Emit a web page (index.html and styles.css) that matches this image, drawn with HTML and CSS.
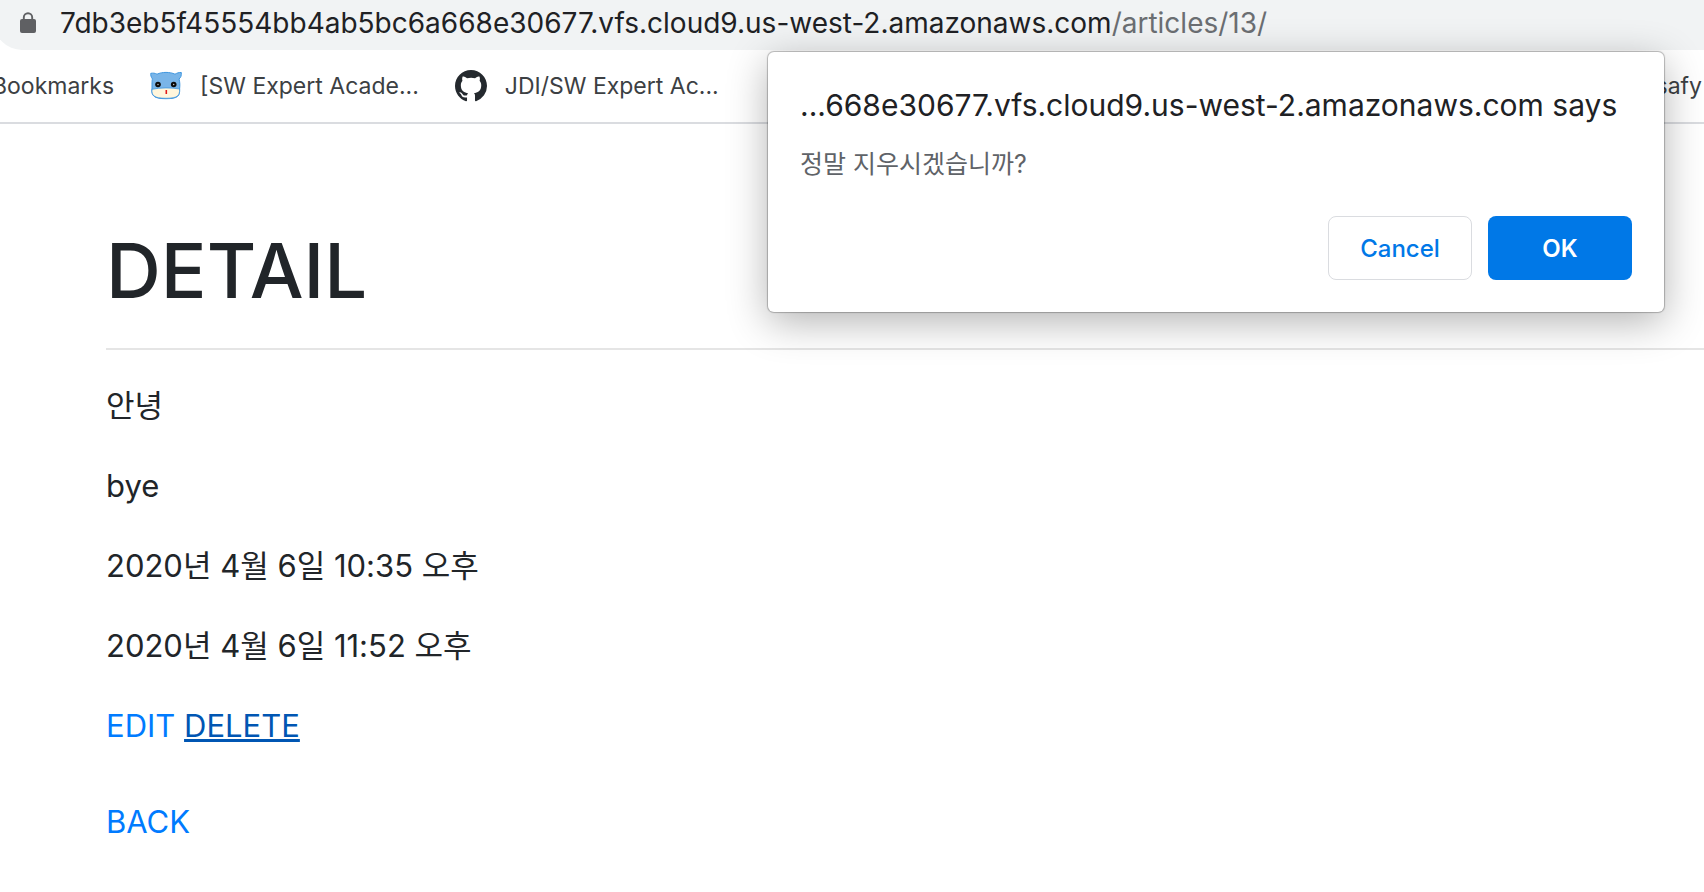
FILE: index.html
```html
<!DOCTYPE html>
<html lang="ko">
<head>
<meta charset="utf-8">
<meta name="viewport" content="width=device-width, initial-scale=1">
<title>DETAIL</title>
<link rel="stylesheet" href="styles.css">
</head>
<body>
<header class="browser">
  <div class="omnibox">
    <svg class="lock" viewBox="0 0 16 22" aria-hidden="true">
      <path d="M3.800 8V5.400a4.200 4.200 0 0 1 8.400 0V8" fill="none" stroke="#5f6063" stroke-width="1.900"/>
      <rect x="0" y="7" width="16" height="14" rx="2" fill="#5f6063"/>
    </svg>
    <div class="url">7db3eb5f45554bb4ab5bc6a668e30677.vfs.cloud9.us-west-2.amazonaws.com<span class="path">/articles/13/</span></div>
  </div>
  <nav class="bookmarks" aria-label="Bookmarks">
    <a class="bookmark first" href="#">Bookmarks</a>
    <a class="bookmark" href="#">
      <svg class="icon" viewBox="0 0 32 32" aria-hidden="true">
        <path d="M2 18C2 12 2 10 2.500 9C1 7 0.500 5 .8 3.300C3 3 5 3 7 4.200C12 1.800 20 1.800 25 4.200C27 3 29 2.300 31.300 2.500C31.500 5.500 31 7.500 29 9C30 12 30 15 29.600 19C30 26 28 28.700 16 28.700C4 28.700 1 26 2 18Z" fill="#79b5e8" stroke="#3f97e0" stroke-width="1"/>
        <path d="M2 19.300C10 17.500 22 17.500 29.600 19C29.800 25.500 28 28.300 16 28.300C4 28.300 1.400 25.500 2 19.300Z" fill="#fff6dc" stroke="#3f97e0" stroke-width="0.800"/>
        <circle cx="8" cy="14.500" r="2.800" fill="#0b0b0b"/>
        <circle cx="23.700" cy="14.500" r="2.800" fill="#0b0b0b"/>
        <circle cx="8" cy="14.500" r=".7" fill="#ccc"/>
        <circle cx="23.700" cy="14.500" r=".7" fill="#ccc"/>
        <path d="M16.300 20v4" stroke="#e01b1b" stroke-width="1.600"/>
      </svg>
      <span>[SW Expert Acade...</span>
    </a>
    <a class="bookmark" href="#">
      <svg class="icon" viewBox="0 0 16 16" aria-hidden="true">
        <path fill="#24292e" d="M8 0C3.580 0 0 3.580 0 8c0 3.540 2.290 6.530 5.470 7.590.4.070.55-.17.55-.38 0-.19-.01-.82-.01-1.490-2.010.37-2.530-.49-2.690-.94-.09-.23-.48-.94-.82-1.130-.28-.15-.68-.52-.01-.53.63-.01 1.080.58 1.230.82.72 1.210 1.870.87 2.330.66.070-.52.28-.87.51-1.070-1.780-.2-3.640-.89-3.640-3.950 0-.87.31-1.590.82-2.150-.08-.2-.36-1.020.08-2.120 0 0 .67-.21 2.200.82.64-.18 1.320-.27 2-.27s1.360.09 2 .27c1.530-1.040 2.200-.82 2.200-.82.44 1.100.16 1.920.08 2.120.51.56.82 1.270.82 2.150 0 3.070-1.870 3.750-3.650 3.950.29.25.54.73.54 1.480 0 1.070-.01 1.930-.01 2.200 0 .21.15.46.55.38A8.010 8.010 0 0 0 16 8c0-4.420-3.580-8-8-8z"/>
      </svg>
      <span>JDI/SW Expert Ac...</span>
    </a>
    <a class="bookmark last" href="#">ssafy</a>
  </nav>
</header>

<main class="page">
  <h1>DETAIL</h1>
  <hr>
  <p>안녕</p>
  <p>bye</p>
  <p>2020년 4월 6일 10:35 오후</p>
  <p>2020년 4월 6일 11:52 오후</p>
  <div class="actions"><a href="#">EDIT</a> <a class="hovered" href="#">DELETE</a></div>
  <a href="#">BACK</a>
</main>

<div class="dialog" role="alertdialog" aria-labelledby="dialog-title" aria-describedby="dialog-text">
  <h2 id="dialog-title">...668e30677.vfs.cloud9.us-west-2.amazonaws.com says</h2>
  <p id="dialog-text">정말 지우시겠습니까?</p>
  <div class="buttons">
    <button type="button" class="cancel">Cancel</button>
    <button type="button" class="ok">OK</button>
  </div>
</div>
</body>
</html>
```

FILE: styles.css
```css
* {
  box-sizing: border-box;
}

body {
  margin: 0;
  overflow-x: hidden;
  background: #fff;
  color: #212529;
  font-family: Inter, "Noto Sans CJK KR", sans-serif;
  font-size: 31px;
  line-height: 48px;
}

.browser {
  border-bottom: 2px solid #dadce0;
}

.omnibox {
  display: flex;
  align-items: center;
  gap: 24px;
  height: 50px;
  margin-left: -6px;
  padding: 0 0 4px 26px;
  border-bottom-left-radius: 28px;
  background: #f1f3f4;
}

.lock {
  width: 16px;
  height: 22px;
}

.url {
  color: #202124;
  font-size: 28px;
  line-height: 44px;
  white-space: nowrap;
}

.path {
  color: #6b6e72;
}

.bookmarks {
  display: flex;
  align-items: center;
  gap: 36px;
  height: 72px;
  overflow: hidden;
}

.bookmark {
  display: flex;
  flex: none;
  align-items: center;
  gap: 18px;
  color: #3c4043;
  font-size: 23px;
  line-height: 32px;
  text-decoration: none;
}

.bookmark.first {
  margin-left: -8px;
}

.bookmark.last {
  margin-left: auto;
  padding-right: 2px;
}

.icon {
  width: 32px;
  height: 32px;
}

.page {
  padding: 98px 0 70px 106px;
}

.page h1 {
  margin: 0;
  font-size: 76px;
  font-weight: 500;
  line-height: 96px;
}

.page hr {
  margin: 30px 0 32px;
  border: 0;
  border-top: 2px solid #e5e5e5;
}

.page p {
  margin: 0 0 32px;
}

.page a {
  color: #007bff;
  text-decoration: none;
}

.page a.hovered {
  color: #0056b3;
  text-decoration: underline;
}

.actions {
  margin-bottom: 48px;
}

.dialog {
  position: absolute;
  top: 52px;
  right: 40px;
  width: 896px;
  padding: 32px;
  border-radius: 6px;
  background: #fff;
  box-shadow: 0 0 1px 1px rgba(0, 0, 0, 0.25), 0 10px 40px rgba(0, 0, 0, 0.3);
}

.dialog h2 {
  margin: 0 0 18px;
  color: #202124;
  font-size: 30px;
  font-weight: 400;
  line-height: 42px;
  white-space: nowrap;
}

.dialog p {
  margin: 0 0 32px;
  color: #5f6368;
  font-size: 25px;
  line-height: 40px;
}

.buttons {
  display: flex;
  justify-content: flex-end;
  gap: 16px;
}

.buttons button {
  width: 144px;
  height: 64px;
  border-radius: 8px;
  font-family: inherit;
  font-size: 24px;
  font-weight: 500;
}

.cancel {
  border: 1px solid #dadce0;
  background: #fff;
  color: #0078e7;
}

.ok {
  border: 0;
  background: #0078e7;
  color: #fff;
}

.buttons .ok {
  font-weight: 600;
}
```
